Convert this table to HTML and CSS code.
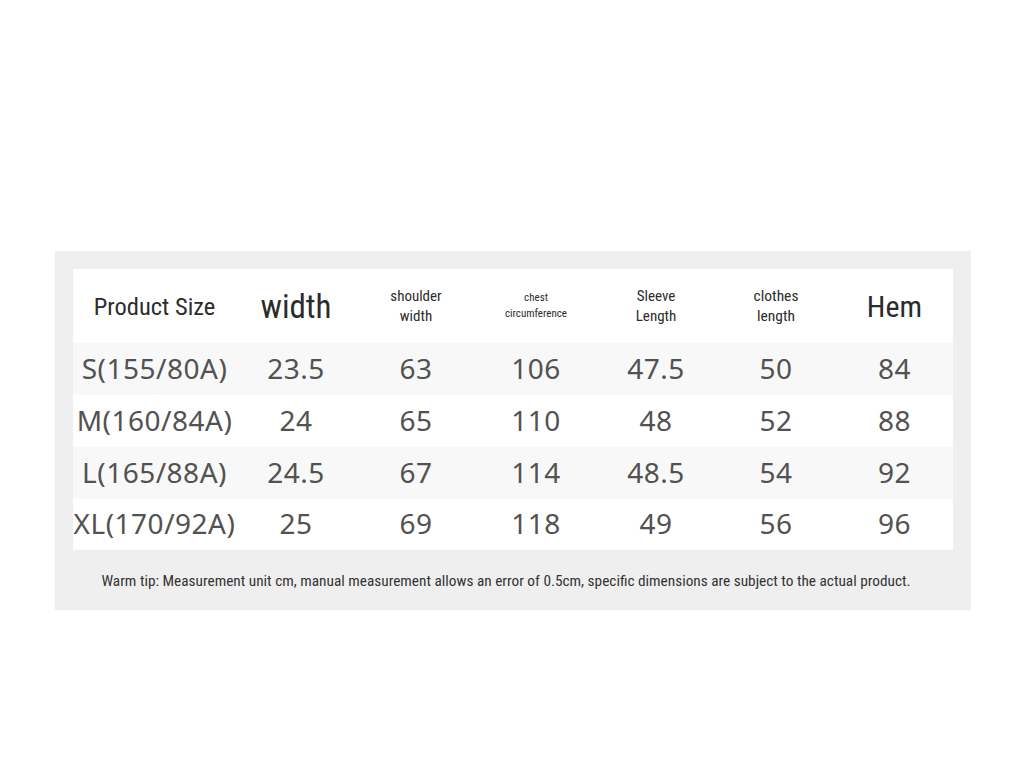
FILE: index.html
```html
<!DOCTYPE html>
<html lang="en">
<head>
<meta charset="utf-8">
<title>Size Chart</title>
<link rel="stylesheet" href="styles.css">
</head>
<body>
<section class="chart">
  <table class="sizes">
    <colgroup>
      <col class="c-size">
      <col class="c-num"><col class="c-num"><col class="c-num"><col class="c-num"><col class="c-num">
      <col class="c-last">
    </colgroup>
    <thead>
      <tr>
        <th class="h-prod">Product Size</th>
        <th class="h-xl">width</th>
        <th class="h-md">shoulder<br>width</th>
        <th class="h-sm">chest<br>circumference</th>
        <th class="h-md">Sleeve<br>Length</th>
        <th class="h-md h-clothes">clothes<br>length</th>
        <th class="h-hem">Hem</th>
      </tr>
    </thead>
    <tbody>
      <tr class="alt"><td>S(155/80A)</td><td>23.5</td><td>63</td><td>106</td><td>47.5</td><td>50</td><td>84</td></tr>
      <tr><td>M(160/84A)</td><td>24</td><td>65</td><td>110</td><td>48</td><td>52</td><td>88</td></tr>
      <tr class="alt"><td>L(165/88A)</td><td>24.5</td><td>67</td><td>114</td><td>48.5</td><td>54</td><td>92</td></tr>
      <tr class="last"><td>XL(170/92A)</td><td>25</td><td>69</td><td>118</td><td>49</td><td>56</td><td>96</td></tr>
    </tbody>
  </table>
  <p class="tip">Warm tip: Measurement unit cm, manual measurement allows an error of 0.5cm, specific dimensions are subject to the actual product.</p>
</section>
</body>
</html>
```

FILE: styles.css
```css
html, body {
  margin: 0;
  padding: 0;
  background: #ffffff;
}

body {
  padding: 251px 0 0 55px;
}

.chart {
  width: 916px;
  box-sizing: border-box;
  padding: 18px 18px 0 18px;
  background: #efefef;
}

.sizes {
  width: 880px;
  table-layout: fixed;
  border-collapse: collapse;
  background: #ffffff;
}

.c-size { width: 163px; }
.c-num { width: 120px; }
.c-last { width: 117px; }

.sizes th {
  height: 74px;
  box-sizing: border-box;
  padding: 0;
  font-family: "Roboto", sans-serif;
  font-stretch: 75%;
  font-weight: 400;
  color: #2c2c2c;
  text-align: center;
  vertical-align: middle;
}

.h-prod { font-size: 24.5px; padding: 5px 0 0 14px; }
.h-xl { font-size: 33px; padding-top: 6px; }
.h-hem { font-size: 30px; padding-top: 6px; }
.h-md { font-size: 15px; line-height: 20px; }
.h-clothes { font-size: 15.5px; }
.h-sm { font-size: 11px; line-height: 16px; }

.sizes td {
  height: 49px;
  padding: 0 0 3px 0;
  font-family: "Noto Sans", sans-serif;
  font-size: 28px;
  line-height: 40px;
  letter-spacing: 0.5px;
  color: #525252;
  text-align: center;
  vertical-align: middle;
  white-space: nowrap;
}

.sizes tr.alt td { background: #f8f8f8; }
.sizes tr.last td { height: 48px; }

.tip {
  margin: 0;
  height: 60px;
  padding: 3px 14px 0 0;
  box-sizing: border-box;
  line-height: 57px;
  text-align: center;
  font-family: "Roboto", sans-serif;
  font-stretch: 75%;
  font-weight: 400;
  font-size: 15.3px;
  color: #333333;
  white-space: nowrap;
}
```
